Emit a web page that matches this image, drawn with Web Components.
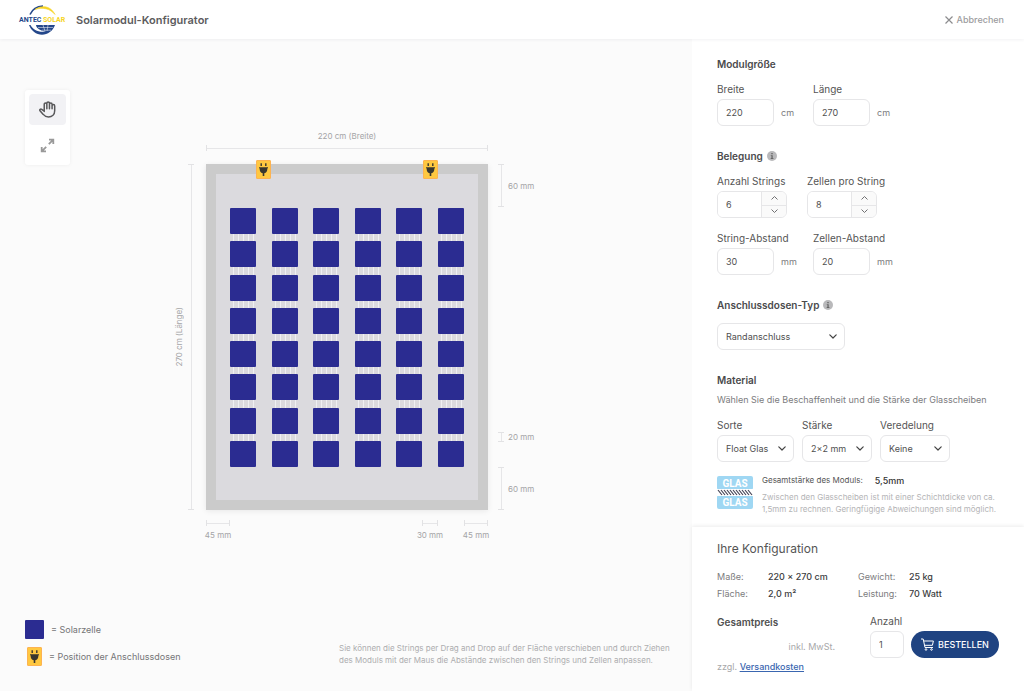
<!DOCTYPE html>
<html lang="de">
<head>
<meta charset="utf-8">
<meta name="viewport" content="width=device-width, initial-scale=1">
<title>Solarmodul-Konfigurator</title>
<style>
  body {
    margin: 0;
    font-family: Inter, "Liberation Sans", sans-serif;
    font-size: 9px;
    line-height: 16px;
    color: #555;
    background: #fbfbfb;
    --line: #e6e6e8;
    --cell: #2b2c91;
  }
</style>
</head>
<body>
<solar-configurator></solar-configurator>

<script>
const define = (name, html, setup) => {
  const template = document.createElement('template');
  template.innerHTML = html;
  customElements.define(name, class extends HTMLElement {
    constructor() {
      super();
      this.attachShadow({ mode: 'open' }).append(template.content.cloneNode(true));
    }
    connectedCallback() {
      if (setup && !this.ready) { this.ready = true; setup(this, this.shadowRoot); }
    }
  });
};

/* Brand mark */
define('brand-logo', `
<style>
  :host { display: block; width: 48px; height: 32px; }
  svg { display: block; width: 100%; height: 100%; }
  text { font: bold 7px Roboto, "Liberation Sans", sans-serif; }
</style>
<svg viewBox="0 0 48 32" role="img" aria-label="Antec Solar">
  <path d="M12 10.500C14 6 18.500 2.300 25 2" fill="none" stroke="#24478a" stroke-width="1.600"/>
  <path d="M17 5.500C24 .5 33 2 37 10.500 32 4.500 25 3 17 5.500z" fill="#f6d423" stroke="#f6d423" stroke-width=".6"/>
  <path d="M11 21c2 5.600 7.400 9.800 13 9.800s11-4 13-9.800H18c0 3 4.500 6 10 6.400-6.500 1.600-13-1.400-15.500-6.400z" fill="#24478a"/>
  <path d="M20 23.500h15M24 26.200h9M25 21l2 6M30 21l-1 6" stroke="#fff" stroke-width=".5" fill="none"/>
  <text x="1" y="18">
    <tspan fill="#24478a">ANTEC</tspan></text>
  <text x="25" y="18" fill="#f6d423">SOLAR</text>
</svg>`);

/* Top bar */
define('app-header', `
<style>
  :host { display: flex; align-items: center; gap: 10px; height: 39px; padding: 0 20px 0 18px; background: #fff; box-shadow: 0 1px 3px rgba(30,30,60,.06); position: relative; z-index: 1; }
  h1 { margin: 0; font-size: 11px; font-weight: 600; color: #5c5c5e; }
  button { display: flex; align-items: center; gap: 4px; margin-left: auto; padding: 0; border: 0; background: none; font: 500 9px/16px Inter, sans-serif; color: #9c9c9e; cursor: pointer; }
  svg { width: 8px; height: 8px; }
</style>
<brand-logo></brand-logo>
<h1><slot></slot></h1>
<button type="button"><svg viewBox="0 0 8 8" aria-hidden="true"><path d="M.5.5l7 7M7.500.5l-7 7" stroke="#8c8c8e" stroke-width="1.200" fill="none"/></svg>Abbrechen</button>`);

/* Floating tools */
define('tool-palette', `
<style>
  :host { display: flex; flex-direction: column; gap: 5px; padding: 4px; background: #fff; border-radius: 3px; box-shadow: 0 0 4px rgba(0,0,0,.06); }
  button { display: grid; place-items: center; width: 37px; height: 31px; padding: 0; border: 0; border-radius: 4px; background: none; cursor: pointer; }
  button[aria-pressed=true] { background: #f2f2f5; }
  svg { display: block; fill: none; }
</style>
<button type="button" aria-pressed="true" aria-label="Verschieben">
  <svg width="17" height="17" viewBox="0 0 26 26" stroke="#58585a" stroke-width="2.300" stroke-linecap="round" stroke-linejoin="round"><path d="M8 16V5a2 2 0 0 1 4 0v7M12 5V3.500a2 2 0 0 1 4 0V12M16 5a2 2 0 0 1 4 0v7M20 7.500a2 2 0 0 1 4 0V15c0 5.500-4 9.500-9.500 9.500-3.500 0-6-1.500-8-4l-5-5.500c-1-1.700 1-3.200 2.600-2.300L8 15.500"/></svg>
</button>
<button type="button" aria-pressed="false" aria-label="Einpassen">
  <svg width="15" height="15" viewBox="0 0 15 15" stroke="#999" stroke-width="1.800"><path d="M9 1.700h4.300V6M13.300 1.700L8.800 6.200M1.700 9v4.300H6M1.700 13.300l4.500-4.500"/></svg>
</button>`);

/* Junction box marker */
define('plug-marker', `
<style>
  :host { display: block; width: 15px; height: 19px; box-sizing: border-box; border: 1px solid #fdb351; border-radius: 1px; background: #ffc840; }
  svg { display: block; width: 100%; height: 100%; }
</style>
<svg viewBox="0 0 13 17" aria-hidden="true" fill="#39372f"><path d="M3.500 2.200h1.400V5H3.500zM8.100 2.200h1.400V5H8.100zM2 6.200h9v1h-.6c0 3-1 4.600-3.100 5.100V15H5.700v-2.700C3.600 11.800 2.600 10.200 2.600 7.200H2z"/></svg>`);

/* Measuring line with end caps; attribute "vertical" turns it */
define('dim-line', `
<style>
  :host { display: flex; flex-direction: column; align-items: center; gap: 1px; white-space: nowrap; font-size: 8px; color: #a4a4a6; }
  i { display: block; box-sizing: border-box; align-self: stretch; height: 6px; border: solid #e2e2e4; border-width: 0 1px; background: linear-gradient(#e6e6e8, #e6e6e8) center / 100% 1px no-repeat; }
  :host([vertical]) { flex-direction: row; gap: 4px; }
  :host([vertical]) i { width: 6px; height: auto; border-width: 1px 0; background-size: 1px 100%; }
  :host([before]) { gap: 1px; }
  :host([before]) i { order: 1; }
  :host([vertical][before]) span { writing-mode: vertical-rl; transform: rotate(180deg); }
</style>
<i></i><span><slot></slot></span>`);

/* Module drawing: strings and cells are generated from attributes */
define('solar-module', `
<style>
  :host { display: flex; justify-content: space-between; position: relative; box-sizing: border-box; height: 346px; padding: 34px 14px 33px; border: 10px solid #cbcbcb; background: #dbdade; box-shadow: 0 1px 6px rgba(0,0,0,.08); }
  .string { display: flex; flex-direction: column; justify-content: space-between; width: 26px; background: repeating-linear-gradient(90deg, transparent 0 3px, #efeff2 3px 4px, transparent 4px 5px) left / 25px 100% no-repeat; }
  .cell { height: 26px; background: var(--cell); border-radius: 1px; }
  plug-marker { position: absolute; top: -14px; left: 40px; }
  plug-marker + plug-marker { left: auto; right: 40px; }
</style>
<plug-marker></plug-marker><plug-marker></plug-marker>`, (el, root) => {
  const strings = +el.getAttribute('strings'), cells = +el.getAttribute('cells');
  for (let s = 0; s < strings; s++) {
    const string = document.createElement('div');
    string.className = 'string';
    for (let c = 0; c < cells; c++) {
      const cell = document.createElement('div');
      cell.className = 'cell';
      string.append(cell);
    }
    root.append(string);
  }
});

/* Workspace with drawing, legend and hint */
define('module-stage', `
<style>
  :host { display: flex; flex-direction: column; position: relative; min-width: 0; }
  tool-palette { position: absolute; left: 25px; top: 51px; }
  .drawing { display: grid; grid-template-columns: 1fr 282px 1fr; gap: 10px; padding: 89px 0 32px 2px; }
  .top { grid-column: 2; margin-bottom: 3px; }
  .left { grid-column: 1; justify-self: end; margin-right: 2px; }
  .right, .bottom { display: flex; }
  .right { flex-direction: column; gap: 25px; }
  .right dim-line { height: 10px; }
  .right .edge { height: 43px; }
  .right .push { margin-bottom: auto; }
  .bottom { grid-column: 2; gap: 26px; }
  .bottom dim-line { width: 24px; }
  .bottom .gap { width: 16px; margin-left: auto; }
  footer { display: flex; justify-content: space-between; align-items: flex-end; margin-top: auto; padding: 0 17px 25px 25px; }
  ul { display: grid; gap: 8px; margin: 0; padding: 0; list-style: none; color: #757577; }
  li { display: flex; align-items: center; gap: 7px; }
  li plug-marker { margin-left: 2px; }
  .swatch { width: 19px; height: 19px; background: var(--cell); border-radius: 1px; }
  p { width: 336px; margin: 0; font-size: 8px; line-height: 12px; color: #adadaf; }
</style>
<tool-palette></tool-palette>
<div class="drawing">
  <dim-line class="top" before>220 cm (Breite)</dim-line>
  <dim-line class="left" vertical before>270 cm (Länge)</dim-line>
  <solar-module strings="6" cells="8"></solar-module>
  <div class="right">
    <dim-line class="edge push" vertical>60 mm</dim-line>
    <dim-line vertical>20 mm</dim-line>
    <dim-line class="edge" vertical>60 mm</dim-line>
  </div>
  <div class="bottom">
    <dim-line>45 mm</dim-line>
    <dim-line class="gap">30 mm</dim-line>
    <dim-line>45 mm</dim-line>
  </div>
</div>
<footer>
  <ul>
    <li><span class="swatch"></span>= Solarzelle</li>
    <li><plug-marker></plug-marker>= Position der Anschlussdosen</li>
  </ul>
  <p>Sie können die Strings per Drag and Drop auf der Fläche verschieben und durch Ziehen des Moduls mit der Maus die Abstände zwischen den Strings und Zellen anpassen.</p>
</footer>`);

/* Shared look of form controls */
const control = `
  label { display: block; font-size: 10px; line-height: 16px; color: #555; white-space: nowrap; }
  .row { display: flex; align-items: center; gap: 7px; margin-top: 2px; color: #7c7c7e; }
  input, select { box-sizing: border-box; height: 27px; margin: 0; padding: 0 8px; border: 1px solid var(--line); border-radius: 6px; outline: 0; background: #fff; font: 9px/16px Inter, sans-serif; color: #505050; appearance: none; }
`;

define('text-field', `
<style>${control}
  :host { display: block; --w: 57px; }
  input { width: var(--w); }
</style>
<label for="c"><slot></slot></label>
<div class="row"><input id="c" type="text" inputmode="numeric"><span></span></div>`, (el, root) => {
  root.querySelector('input').value = el.getAttribute('value');
  const unit = root.querySelector('span');
  if (el.hasAttribute('unit')) unit.textContent = el.getAttribute('unit'); else unit.remove();
});

define('stepper-field', `
<style>${control}
  :host { display: block; }
  .box { display: grid; grid-template-columns: 1fr 25px; box-sizing: border-box; width: 70px; height: 27px; margin-top: 2px; border: 1px solid var(--line); border-radius: 6px; overflow: hidden; }
  input { width: 100%; height: 25px; border: 0; border-radius: 0; }
  .steps { display: grid; grid-template-rows: 1fr 1fr; border-left: 1px solid var(--line); background: #fafafa; }
  button { display: grid; place-items: center; padding: 0; border: 0; background: none; }
  button + button { border-top: 1px solid var(--line); }
  svg { display: block; fill: none; stroke: #707072; }
</style>
<label for="c"><slot></slot></label>
<div class="box"><input id="c" type="text" inputmode="numeric">
  <div class="steps">
    <button type="button" aria-label="Mehr"><svg width="7" height="4" viewBox="0 0 7 4"><path d="M.5 3.500l3-3 3 3"/></svg></button>
    <button type="button" aria-label="Weniger"><svg width="7" height="4" viewBox="0 0 7 4"><path d="M.5.5l3 3 3-3"/></svg></button>
  </div>
</div>`, (el, root) => {
  const input = root.querySelector('input');
  input.value = el.getAttribute('value');
  root.querySelectorAll('button').forEach((b, i) =>
    b.addEventListener('click', () => { input.value = Math.max(1, +input.value + (i ? -1 : 1)); }));
});

define('select-field', `
<style>${control}
  :host { display: block; --w: 70px; }
  .box { display: grid; align-items: center; width: var(--w); margin-top: 2px; }
  select, svg { grid-area: 1 / 1; }
  select { width: 100%; }
  svg { justify-self: end; margin-right: 8px; fill: none; stroke: #444; stroke-width: 1.200; stroke-linecap: round; stroke-linejoin: round; pointer-events: none; }
</style>
<label for="c"><slot></slot></label>
<div class="box"><select id="c"></select><svg width="8" height="5" viewBox="0 0 8 5"><path d="M.8.800L4 4 7.200.800"/></svg></div>`, (el, root) => {
  const select = root.querySelector('select');
  for (const text of el.getAttribute('options').split('|')) select.append(new Option(text));
  if (el.hasAttribute('label')) {
    select.setAttribute('aria-label', el.getAttribute('label'));
    root.querySelector('label').remove();
  }
});

define('section-title', `
<style>
  :host { display: flex; align-items: center; gap: 4px; }
  h2 { margin: 0; font-size: 10px; line-height: 16px; font-weight: 600; color: #4a4a4c; }
  svg { display: none; }
  :host([info]) svg { display: block; }
</style>
<h2><slot></slot></h2>
<svg width="10" height="10" viewBox="0 0 10 10" aria-hidden="true"><circle cx="5" cy="5" r="5" fill="#b9b9bb"/><path d="M4.300 2h1.400v1.200H4.300zM3.800 4.200h1.900v2.900h.7v.8H3.700v-.8h.7V5h-.6z" fill="#666"/></svg>`);

/* Cross-section of the glass sandwich */
define('glass-icon', `
<style>
  :host { display: block; width: 36px; height: 33px; }
  svg { display: block; }
  text { font: bold 10px Roboto, "Liberation Sans", sans-serif; fill: #fff; text-anchor: middle; }
</style>
<svg width="36" height="33" viewBox="0 0 36 33" role="img" aria-label="Glas">
  <rect width="36" height="14" rx="2" fill="#9fd7f3"/>
  <rect y="19" width="36" height="14" rx="2" fill="#9fd7f3"/>
  <rect y="13" width="36" height="7" fill="#fff"/>
  <path d="M1 14l4 5m-1-5l4 5m-1-5l4 5m-1-5l4 5m-1-5l4 5m-1-5l4 5m-1-5l4 5m-1-5l4 5m-1-5l4 5m-1-5l4 5m-1-5l4 5" stroke="#444355" stroke-width="1.200"/>
  <text x="18" y="11">GLAS</text><text x="18" y="30">GLAS</text>
</svg>`);

define('config-form', `
<style>
  :host { display: block; padding: 17px 25px 12px; }
  .fields { display: flex; gap: 20px; margin-top: 9px; }
  .pair { display: grid; grid-template-columns: 96px 1fr; margin-top: 9px; }
  .fields + .pair { margin-top: 12px; }
  .narrow { gap: 8px; }
  section + section { margin-top: 22px; }
  p { margin: 0; }
  .intro { margin-top: 4px; color: #7c7c7e; }
  .glass { display: flex; gap: 9px; margin-top: 14px; }
  .total { display: flex; gap: 12px; font-size: 8px; line-height: 9px; }
  .total b { font-size: 9px; font-weight: 500; color: #333; }
  .note { margin-top: 6px; font-size: 8px; line-height: 12px; color: #b4b4b6; white-space: nowrap; }
  .wide { --w: 128px; margin-top: 10px; }
  .sort { --w: 77px; }
</style>
<section>
  <section-title>Modulgröße</section-title>
  <div class="pair">
    <text-field value="220" unit="cm">Breite</text-field>
    <text-field value="270" unit="cm">Länge</text-field>
  </div>
</section>
<section>
  <section-title info>Belegung</section-title>
  <div class="fields">
    <stepper-field value="6">Anzahl Strings</stepper-field>
    <stepper-field value="8">Zellen pro String</stepper-field>
  </div>
  <div class="pair">
    <text-field value="30" unit="mm">String-Abstand</text-field>
    <text-field value="20" unit="mm">Zellen-Abstand</text-field>
  </div>
</section>
<section>
  <section-title info>Anschlussdosen-Typ</section-title>
  <select-field class="wide" label="Anschlussdosen-Typ" options="Randanschluss|Rückseite"></select-field>
</section>
<section>
  <section-title>Material</section-title>
  <p class="intro">Wählen Sie die Beschaffenheit und die Stärke der Glasscheiben</p>
  <div class="fields narrow">
    <select-field class="sort" options="Float Glas|ESG|VSG">Sorte</select-field>
    <select-field options="2×2 mm|3×3 mm">Stärke</select-field>
    <select-field options="Keine|Satiniert">Veredelung</select-field>
  </div>
  <div class="glass">
    <glass-icon></glass-icon>
    <div>
      <p class="total"><span>Gesamtstärke des Moduls:</span><b>5,5mm</b></p>
      <p class="note">Zwischen den Glasscheiben ist mit einer Schichtdicke von ca.<br>1,5mm zu rechnen. Geringfügige Abweichungen sind möglich.</p>
    </div>
  </div>
</section>`);

define('order-summary', `
<style>
  :host { display: block; padding: 14px 25px 12px; background: #fff; box-shadow: 0 -1px 4px rgba(0,0,0,.08); }
  h2 { margin: 0; font-size: 12px; line-height: 16px; font-weight: 400; color: #555; }
  dl { display: grid; grid-template-columns: 51px 90px 51px 1fr; margin: 11px 0 0; line-height: 17px; color: #7c7c7e; }
  dd { margin: 0; font-weight: 500; color: #3c3c3e; }
  .order { display: flex; justify-content: space-between; margin-top: 11px; }
  .price { display: flex; flex-direction: column; width: 118px; }
  h3 { margin: 0; font-size: 10px; line-height: 18px; font-weight: 600; color: #505050; }
  .tax { margin: 8px 0 0; text-align: right; color: #a8a8aa; }
  .ship { margin: 4px 0 0; color: #a8a8aa; }
  a { font-weight: 500; color: #3a66b0; }
  .buy { display: flex; align-items: flex-end; gap: 7px; align-self: flex-start; }
  text-field { --w: 34px; }
  button { display: flex; align-items: center; justify-content: center; gap: 4px; width: 88px; height: 27px; padding: 0; border: 0; border-radius: 14px; background: #1f4381; color: #fff; font: 500 9px/16px Inter, sans-serif; cursor: pointer; }
  svg { display: block; fill: none; stroke: #fff; }
</style>
<h2>Ihre Konfiguration</h2>
<dl>
  <dt>Maße:</dt><dd>220 × 270 cm</dd><dt>Gewicht:</dt><dd>25 kg</dd>
  <dt>Fläche:</dt><dd>2,0 m²</dd><dt>Leistung:</dt><dd>70 Watt</dd>
</dl>
<div class="order">
  <div class="price">
    <h3>Gesamtpreis</h3>
    <p class="tax">inkl. MwSt.</p>
    <p class="ship">zzgl. <a href="#versand">Versandkosten</a></p>
  </div>
  <div class="buy">
    <text-field value="1">Anzahl</text-field>
    <button type="button"><svg width="13" height="13" viewBox="0 0 13 13" aria-hidden="true"><path d="M0 1h2.200l1.800 8.500h8M2.700 3h9.700l-1 4.300H3.700"/><circle cx="5" cy="11.500" r=".8"/><circle cx="10.500" cy="11.500" r=".8"/></svg>BESTELLEN</button>
  </div>
</div>`);

define('solar-configurator', `
<style>
  :host { display: grid; grid-template: auto 1fr / 1fr 332px; min-height: 100vh; }
  app-header { grid-column: 1 / -1; }
  aside { display: flex; flex-direction: column; background: #fff; }
  order-summary { flex: 1; }
</style>
<app-header>Solarmodul-Konfigurator</app-header>
<module-stage></module-stage>
<aside><config-form></config-form><order-summary></order-summary></aside>`);
</script>
</body>
</html>
